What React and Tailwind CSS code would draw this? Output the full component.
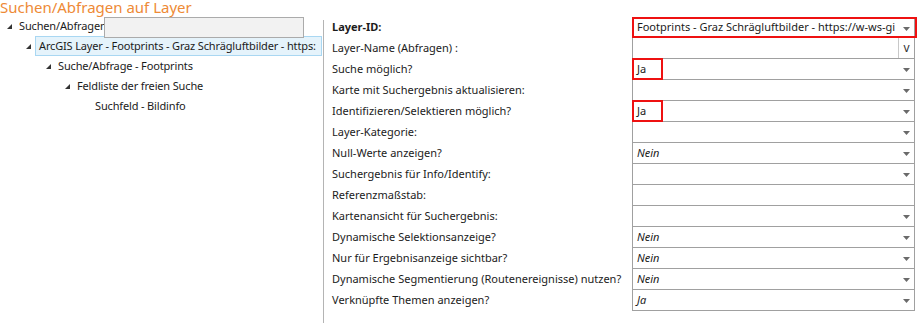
import React from "react";

const Tri = () => (
  <svg width="7" height="7" viewBox="0 0 7 7" className="shrink-0">
    <path d="M6 1 L6 6 L1 6 Z" fill="#333" />
  </svg>
);

const Arrow = () => (
  <svg width="7" height="4" viewBox="0 0 7 4" className="absolute right-[4px] top-[9px]">
    <path d="M0 0 L7 0 L3.5 4 Z" fill="#6a6a6a" />
  </svg>
);

const rows = [
  { label: "Layer-ID:", bold: true, value: "Footprints - Graz Schrägluftbilder - https://w-ws-gi", arrow: true, red: "full" },
  { label: "Layer-Name (Abfragen) :", value: "", btn: true },
  { label: "Suche möglich?", value: "Ja", arrow: true, red: "small" },
  { label: "Karte mit Suchergebnis aktualisieren:", value: "", arrow: true },
  { label: "Identifizieren/Selektieren möglich?", value: "Ja", arrow: true, red: "small" },
  { label: "Layer-Kategorie:", value: "", arrow: true },
  { label: "Null-Werte anzeigen?", value: "Nein", italic: true, arrow: true },
  { label: "Suchergebnis für Info/Identify:", value: "", arrow: true },
  { label: "Referenzmaßstab:", value: "" },
  { label: "Kartenansicht für Suchergebnis:", value: "", arrow: true },
  { label: "Dynamische Selektionsanzeige?", value: "Nein", italic: true, arrow: true },
  { label: "Nur für Ergebnisanzeige sichtbar?", value: "Nein", italic: true, arrow: true },
  { label: "Dynamische Segmentierung (Routenereignisse) nutzen?", value: "Nein", italic: true, arrow: true },
  { label: "Verknüpfte Themen anzeigen?", value: "Ja", italic: true, arrow: true },
];

export default function App() {
  return (
    <div
      className="relative w-[919px] h-[323px] bg-white overflow-hidden text-[11px] text-[#1b1b1b]"
      style={{ fontFamily: '"Noto Sans", "Open Sans", sans-serif' }}
    >
      <div className="h-[16px] leading-[15px] text-[15px] text-[#ee8a36] whitespace-nowrap">
        Suchen/Abfragen auf Layer
      </div>
      <div className="flex">
        {/* Tree */}
        <div className="relative w-[323px] shrink-0 tracking-[-0.15px]">
          <div className="flex items-center h-[20px] pl-[6px] gap-[6px]">
            <Tri />
            <span className="whitespace-nowrap">Suchen/Abfragen</span>
          </div>
          <div className="absolute left-[104px] top-[1px] w-[200px] h-[21px] bg-[#f2f2f2] border border-[#ababab]" />
          <div className="flex items-center h-[20px] pl-[25px] gap-[3px]">
            <Tri />
            <div className="flex items-center h-[20px] w-[287px] bg-[#e5f3fb] border border-[#a9d7f2] pl-[3px] whitespace-nowrap overflow-hidden">
              ArcGIS Layer - Footprints - Graz Schrägluftbilder - https:
            </div>
          </div>
          <div className="flex items-center h-[20px] pl-[45px] gap-[6px]">
            <Tri />
            <span className="whitespace-nowrap">Suche/Abfrage - Footprints</span>
          </div>
          <div className="flex items-center h-[20px] pl-[64px] gap-[6px]">
            <Tri />
            <span className="whitespace-nowrap">Feldliste der freien Suche</span>
          </div>
          <div className="flex items-center h-[20px] pl-[95px]">
            <span className="whitespace-nowrap">Suchfeld - Bildinfo</span>
          </div>
        </div>
        {/* Divider */}
        <div className="w-px bg-[#b4b4b4] mt-[4px] h-[303px] shrink-0" />
        {/* Properties */}
        <div className="pt-[1px]">
          <div className="flex flex-col">
            {rows.map((r, i) => (
              <div key={i} className="flex h-[21px]">
                <div
                  className={
                    "w-[308px] pl-[8px] flex items-center whitespace-nowrap " +
                    (r.bold ? "font-bold" : "")
                  }
                >
                  {r.label}
                </div>
                <div
                  className={
                    "relative w-[283px] border-l border-r border-b border-[#a0a0a0] flex items-center pl-[4px] whitespace-nowrap " +
                    (i === 0 ? "border-t" : "") +
                    (r.italic ? " italic" : "")
                  }
                >
                  {r.value}
                  {r.arrow && <Arrow />}
                  {r.btn && (
                    <div className="absolute right-0 top-0 bottom-0 w-[16px] border-l border-[#c8c8c8] flex items-center justify-center text-[12px] text-[#333]">
                      v
                    </div>
                  )}
                  {r.red === "full" && (
                    <div className="absolute left-[-1px] top-[-1px] right-[-3px] bottom-[-1px] border-2 border-[#ee1111]" />
                  )}
                  {r.red === "small" && (
                    <div className="absolute left-[-1px] top-[-1px] w-[31px] h-[22px] border-2 border-[#ee1111]" />
                  )}
                </div>
              </div>
            ))}
          </div>
        </div>
      </div>
    </div>
  );
}
